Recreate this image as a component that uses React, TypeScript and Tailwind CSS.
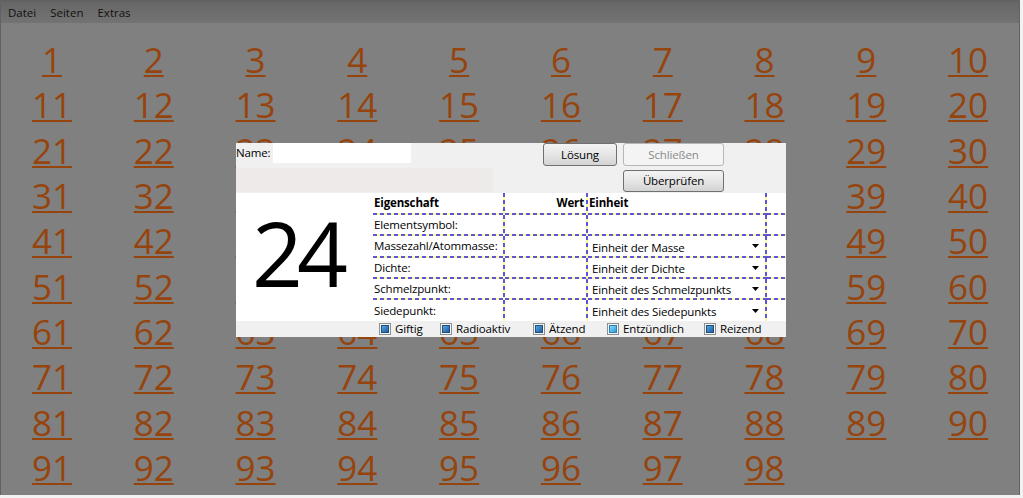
import React from "react";

const rows: { label: string; unit: string; header?: boolean }[] = [
  { label: "Eigenschaft", unit: "Einheit", header: true },
  { label: "Elementsymbol:", unit: "" },
  { label: "Massezahl/Atommasse:", unit: "Einheit der Masse" },
  { label: "Dichte:", unit: "Einheit der Dichte" },
  { label: "Schmelzpunkt:", unit: "Einheit des Schmelzpunkts" },
  { label: "Siedepunkt:", unit: "Einheit des Siedepunkts" },
];

const checks = [
  { label: "Giftig", w: "w-[61px]", light: false },
  { label: "Radioaktiv", w: "w-[93px]", light: false },
  { label: "Ätzend", w: "w-[74px]", light: false },
  { label: "Entzündlich", w: "w-[97px]", light: true },
  { label: "Reizend", w: "w-[80px]", light: false },
];

const LINE_BOTH =
  "bg-[image:repeating-linear-gradient(90deg,#5d55d6_0_4px,#fbfb9c_4px_7px),repeating-linear-gradient(180deg,#5d55d6_0_4px,#fbfb9c_4px_7px)] bg-[length:100%_2px,2px_100%] bg-[position:left_bottom,right_top] bg-no-repeat";
const LINE_BOTTOM =
  "bg-[image:repeating-linear-gradient(90deg,#5d55d6_0_4px,#fbfb9c_4px_7px)] bg-[length:100%_2px] bg-bottom bg-no-repeat";
const LINE_RIGHT =
  "bg-[image:repeating-linear-gradient(180deg,#5d55d6_0_4px,#fbfb9c_4px_7px)] bg-[length:2px_100%] bg-right bg-no-repeat";

function Arrow() {
  return (
    <svg width="7" height="4" viewBox="0 0 7 4" className="shrink-0">
      <path d="M0 0 H7 L3.5 4 Z" fill="#000" />
    </svg>
  );
}

function Check({ light }: { light: boolean }) {
  return (
    <div className="w-[12px] h-[12px] border border-[#8e8f8f] bg-[#f4f4f4] flex items-center justify-center shrink-0">
      <div
        className={
          light
            ? "w-[8px] h-[8px] border border-[#2a7fb8] bg-linear-to-br from-[#86dcf8] to-[#2c9ad8]"
            : "w-[8px] h-[8px] border border-[#1d4f85] bg-linear-to-br from-[#5aa6e0] to-[#1f5c9e]"
        }
      />
    </div>
  );
}

function Cell({
  children,
  col,
  row,
  className,
}: {
  children?: React.ReactNode;
  col: number;
  row: number;
  className?: string;
}) {
  const right = col < 3;
  const bottom = row < 5;
  const lines = right && bottom ? LINE_BOTH : bottom ? LINE_BOTTOM : right ? LINE_RIGHT : "";
  return (
    <div className={`${lines} bg-white flex items-center min-w-0 ${bottom ? "pb-[2px]" : ""} ${className ?? ""}`}>
      {children}
    </div>
  );
}

export default function App() {
  const nums = Array.from({ length: 98 }, (_, i) => i + 1);
  return (
    <div className="relative w-[1023px] h-[498px] bg-[#f2f2f2] overflow-hidden font-['Open_Sans',sans-serif]">
      <div className="w-[1020px] h-[495px] bg-[#808080] border-t-2 border-l border-r border-[#626262] flex flex-col">
        <div className="h-[21px] shrink-0 bg-linear-to-b from-[#676767] to-[#737373] flex items-center text-[11.5px] text-[#111]">
          <span className="px-[7px]">Datei</span>
          <span className="px-[7px]">Seiten</span>
          <span className="px-[7px]">Extras</span>
        </div>
        <div className="pt-[14px] grid grid-cols-10 auto-rows-[45.33px]">
          {nums.map((n) => (
            <div key={n} className="flex justify-center">
              <span className="text-[35px] leading-[45.33px] text-[#96440e] underline decoration-2 underline-offset-[2px]">
                {n}
              </span>
            </div>
          ))}
        </div>
      </div>

      <div className="absolute left-[236px] top-[143px] w-[550px] flex flex-col text-[11.5px] tracking-[-0.15px] text-black">
        <div className="h-[50px] bg-[#f0f0f0] flex">
          <div className="w-[257px] flex flex-col">
            <div className="h-[25px] flex items-start">
              <span className="w-[37px] leading-[20px]">Name:</span>
              <div className="w-[138px] h-[20px] bg-white" />
            </div>
            <div className="h-[24px] bg-[#eeeaea]" />
          </div>
          <div className="ml-[50px] w-[74px] h-[23px] rounded-[3px] border border-[#707070] bg-linear-to-b from-[#f3f3f3] via-[#e6e6e6] to-[#d3d3d3] flex items-center justify-center">
            Lösung
          </div>
          <div className="ml-[6px] flex flex-col">
            <div className="w-[101px] h-[23px] rounded-[3px] border border-[#b3b7ba] bg-[#f4f4f4] text-[#8a8a8a] flex items-center justify-center">
              Schließen
            </div>
            <div className="mt-[4px] w-[101px] h-[22px] rounded-[3px] border border-[#707070] bg-linear-to-b from-[#f3f3f3] via-[#e6e6e6] to-[#d3d3d3] flex items-center justify-center">
              Überprüfen
            </div>
          </div>
        </div>

        <div className="h-[128px] bg-white flex">
          <div className="w-[128px] flex items-center justify-center pb-[10px]">
            <span className="text-[89px] leading-none tracking-[-6px] pr-[6px] text-black">24</span>
          </div>
          <div className="ml-[9px] w-[413px] grid grid-cols-[132px_83px_179px_19px] grid-rows-[22px_21px_22px_21px_21px_21px]">
            {rows.map((r, ri) => (
              <React.Fragment key={ri}>
                <Cell col={0} row={ri} className="pl-[1px]">
                  <span className={r.header ? "font-bold" : ""}>{r.label}</span>
                </Cell>
                <Cell col={1} row={ri} className="justify-end pr-[4px]">
                  {r.header ? <span className="font-bold">Wert</span> : null}
                </Cell>
                <Cell
                  col={2}
                  row={ri}
                  className={r.header ? "pl-[1px]" : "pl-[4px] pr-[8px] justify-between"}
                >
                  {r.header ? (
                    <span className="font-bold">{r.unit}</span>
                  ) : r.unit ? (
                    <>
                      <span className="pt-[3px]">{r.unit}</span>
                      <Arrow />
                    </>
                  ) : null}
                </Cell>
                <Cell col={3} row={ri} />
              </React.Fragment>
            ))}
          </div>
        </div>

        <div className="h-[16px] bg-[#f0f0f0] flex items-center pl-[143px]">
          {checks.map((c) => (
            <div key={c.label} className={`${c.w} flex items-center`}>
              <Check light={c.light} />
              <span className="ml-[4px] leading-[14px]">{c.label}</span>
            </div>
          ))}
        </div>
      </div>
    </div>
  );
}
